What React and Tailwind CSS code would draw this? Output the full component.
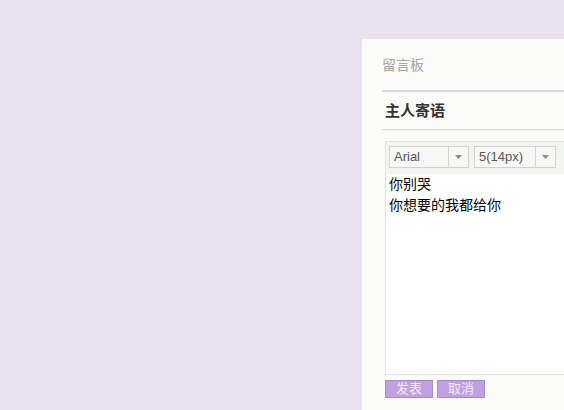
import React from "react";

const Select = ({ value, width }) => (
  <div
    className="flex h-[22px] border border-[#cfd3cc] bg-[#f7f8f6]"
    style={{ width }}
  >
    <div className="flex-1 pl-[4px] text-[13px] leading-[20px] text-[#555]">{value}</div>
    <div className="w-[20px] flex items-center justify-center border-l border-[#d3d6d0]">
      <svg width="7" height="4" viewBox="0 0 7 4">
        <path d="M0 0h7L3.5 4z" fill="#8a8a8a" />
      </svg>
    </div>
  </div>
);

const App = () => {
  return (
    <div
      className="w-[564px] h-[410px] overflow-hidden bg-[#e9e1f0] pl-[362px] pt-[39px]"
      style={{ fontFamily: '"Liberation Sans", "Noto Sans CJK SC", sans-serif' }}
    >
      <div className="w-[260px] h-full bg-[#fbfcfa] pl-[20px] pt-[15px] flex flex-col">
        <div className="text-[14px] leading-[22px] text-[#a3a3a3]">留言板</div>
        <div className="mt-[14px] border-t-2 border-[#d9d9d9]" />
        <div className="pl-[3px] mt-[8px] text-[15px] leading-[22px] font-bold text-[#333]">主人寄语</div>
        <div className="mt-[7px] border-t border-[#d6dad3]" />
        <div className="ml-[3px] mt-[11px] h-[234px] border border-[#dde4d8] bg-white flex flex-col">
          <div className="h-[32px] bg-[#f3f5f1] flex items-start pt-[4px] gap-[5px] pl-[3px]">
            <Select value="Arial" width={80} />
            <Select value="5(14px)" width={82} />
          </div>
          <div className="pl-[3px] text-[14px] leading-[21px] text-black">
            <div>你别哭</div>
            <div>你想要的我都给你</div>
          </div>
        </div>
        <div className="ml-[3px] mt-[5px] flex gap-[4px]">
          <button className="w-[48px] h-[18px] bg-[#c29fe0] border border-[#ab8acb] text-[13px] leading-[16px] text-[#f5ecf8]">
            发表
          </button>
          <button className="w-[48px] h-[18px] bg-[#c29fe0] border border-[#ab8acb] text-[13px] leading-[16px] text-[#f5ecf8]">
            取消
          </button>
        </div>
      </div>
    </div>
  );
};

export default App;
